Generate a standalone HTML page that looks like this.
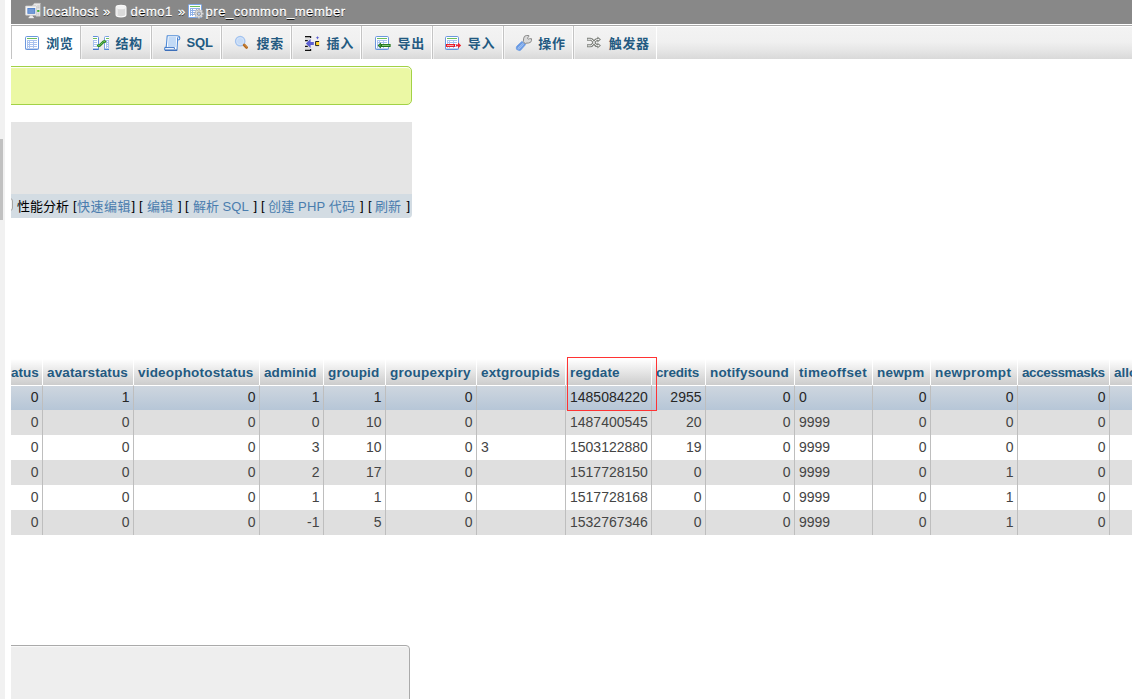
<!DOCTYPE html>
<html lang="zh-CN">
<head>
<meta charset="utf-8">
<title>localhost / demo1 / pre_common_member | phpMyAdmin</title>
<style>
*{box-sizing:border-box;margin:0;padding:0}
html,body{width:1132px;height:699px;overflow:hidden;background:#fff}
body{position:relative;font-family:"Liberation Sans","Noto Sans CJK SC",sans-serif;font-size:13px;color:#444}
.abs{position:absolute}
/* left nav scrollbar sliver */
#navtrack{left:0;top:0;width:5px;height:699px;background:#f1f1f1}
#navthumb{left:0;top:139px;width:3px;height:81px;background:#c1c1c1}
#main{left:11px;top:0;width:1121px;height:699px;overflow:hidden}
#main>.abs,#main>table{margin-left:-11px}
/* breadcrumb bar */
#serverinfo{left:11px;top:0;width:1121px;height:24px;background:#888;color:#fff;white-space:nowrap;text-shadow:0 1px 0 #000}
#serverinfo .t{position:absolute;top:1px;line-height:22px;font-size:13px;-webkit-text-stroke:.3px #fff}
#serverinfo svg{position:absolute}
/* tabs */
#topmenu{left:11px;top:25px;width:1121px;height:34px;border-top:1px solid #aaa;background:linear-gradient(#fff 0,#fff 1px,#f3f3f3 1px,#f0f0f0 48%,#e5e5e5 76%,#d9d9d9 100%)}
.tab{position:absolute;top:26px;height:33px;border-left:1px solid #c4c4c4;border-right:1px solid #fff;margin-right:-1px;background:linear-gradient(#fff 0,#fff 1px,#f3f3f3 1px,#f0f0f0 48%,#e5e5e5 76%,#d9d9d9 100%);box-shadow:inset 1px 0 0 rgba(255,255,255,.5)}
.tab.active{background:#fff;box-shadow:none}
.tl{top:27px;letter-spacing:.6px;line-height:33px;font-size:13px;font-weight:bold;color:#235a81;white-space:nowrap}
svg.ic{overflow:visible}
/* messages */
#success{left:-10px;top:66px;width:422px;height:39px;border:1px solid #a2d246;border-radius:5px;background:#ebf8a4;box-shadow:inset 0 1px 1px #fff}
#sqlq{left:11px;top:122px;width:401px;height:72px;background:#e5e5e5}
#tools{left:11px;top:194px;width:401px;height:24px;background:#d3dce3;border-radius:0 0 4px 0;white-space:nowrap;color:#000;font-size:13px;line-height:24px}
#tools a{color:#4a7dae;text-decoration:none}
#tools span,#tools a{position:absolute;top:1px}
#tools span{top:0}
#fs{left:-10px;top:645px;width:420px;height:80px;border:1px solid #aaa;border-radius:4px;background:#eee;box-shadow:inset 0 1px 1px rgba(255,255,255,.7)}
/* results table */
#res{left:11px;top:359px;border-collapse:separate;border-spacing:0;table-layout:fixed;width:1190px}
#res th{height:26px;padding:1px 0 1px 4px;text-align:left;font-weight:bold;font-size:13.5px;color:#235a81;background:linear-gradient(#fff,#ccc);border-right:1px solid #fff;white-space:nowrap;overflow:hidden}
#res td{height:25px;padding:0 3.5px 2px 4px;text-align:right;font-size:14px;color:#444;border-right:1px solid #bebebe;white-space:nowrap;overflow:hidden}
#res td.l{text-align:left}
#res tr.e td{background:#dfdfdf}
#res tr.o td{background:#fff}
#res tr.h td{background:linear-gradient(#ced6df,#b6c6d7);border-top:1px solid #fff;color:#262626}
#redbox{left:567px;top:357px;width:90px;height:54px;border:1px solid #f33}
</style>
</head>
<body>
<div id="navtrack" class="abs"></div>
<div id="navthumb" class="abs"></div>

<div id="main" class="abs">
<div id="serverinfo" class="abs">
    <span class="t" style="left:32px;letter-spacing:.43px">localhost</span>
  <span class="t" style="left:92px">»</span>
  <span class="t" style="left:119.5px;letter-spacing:.49px">demo1</span>
  <span class="t" style="left:167px">»</span>
  <span class="t" style="left:194.6px;letter-spacing:.55px">pre_common_member</span>
</div>
<svg class="abs ic" style="left:24.5px;top:3px" width="16" height="16" viewBox="0 0 16 16"><path d="M7,3 L9.4,0.3 H15 Q15.6,0.3 15.6,0.9 V12.6 Q15.6,13.2 15,13.2 H11 V3 Z" fill="#e9e9e9" stroke="#bdbdbd" stroke-width=".6"/><path d="M15.5,1V13" stroke="#9d9d9d" stroke-width=".7"/><path d="M12.2,3H14.6M12.2,4.8H14.6" stroke="#b5b5b5" stroke-width=".8"/><rect x="12.2" y="7" width="2.2" height="1.9" fill="#3cb034"/><rect x="12.4" y="9.6" width="1.8" height="3" fill="#cfcfd6"/><rect x="0.5" y="3" width="11" height="9.2" rx=".6" fill="#f3f3f3" stroke="#c9c9c9" stroke-width=".7"/><rect x="2.4" y="5" width="7.8" height="5.8" fill="#4f7fca"/><rect x="3.2" y="5.8" width="6.2" height="4.2" fill="#7099d6"/><path d="M5,12.4H7.4L8.6,14.8H3.8Z" fill="#ececec"/><rect x="3.6" y="14.2" width="5.2" height="1" fill="#f5f5f5"/></svg><svg class="abs ic" style="left:113px;top:3px" width="16" height="16" viewBox="0 0 16 16"><path d="M3.1,4.4 V11.8 Q3.1,13.8 8,13.8 Q12.9,13.8 12.9,11.8 V4.4 Q12.9,2.3 8,2.3 Q3.1,2.3 3.1,4.4Z" fill="#dadada" stroke="#fbfbfb" stroke-width="1.2"/><ellipse cx="8" cy="4.4" rx="4.4" ry="1.9" fill="#f4f4f4"/><path d="M4.4,6.2 V12.2" stroke="#ececec" stroke-width="1"/></svg><svg class="abs ic" style="left:187px;top:3px" width="16" height="16" viewBox="0 0 16 16"><rect x="1.5" y="1.5" width="13" height="13" rx=".8" fill="#fff" stroke="#7aa6ea"/><rect x="3" y="3" width="10" height="1" fill="#6cbf5c"/><rect x="3" y="5" width="10" height="8" fill="#8fb1e8"/><g fill="#fff"><rect x="4" y="6" width="1" height="1"/><rect x="6" y="6" width="3" height="1"/><rect x="10" y="6" width="2" height="1"/><rect x="4" y="8" width="1" height="1"/><rect x="6" y="8" width="3" height="1"/><rect x="4" y="10" width="1" height="1"/><rect x="6" y="10" width="2" height="1"/><rect x="4" y="12" width="1" height="1"/><rect x="6" y="12" width="2" height="1"/></g><g transform="translate(11.9,10.7)"><g fill="#d9d9d9" stroke="#a9a9a9" stroke-width=".5"><circle r="3.3"/><rect x="-.9" y="-4.6" width="1.8" height="9.2"/><rect x="-4.6" y="-.9" width="9.2" height="1.8"/><rect x="-.9" y="-4.6" width="1.8" height="9.2" transform="rotate(45)"/><rect x="-.9" y="-4.6" width="1.8" height="9.2" transform="rotate(-45)"/></g><circle r="3" fill="#dedede"/><circle r="1.7" fill="#b9d0f2" stroke="#8f8f8f" stroke-width=".9"/></g></svg>

<div id="topmenu" class="abs"></div>
<div class="tab active abs" style="left:11px;width:69px"></div>
<div class="tab abs" style="left:80px;width:71px"></div>
<div class="tab abs" style="left:151px;width:70px"></div>
<div class="tab abs" style="left:221px;width:70px"></div>
<div class="tab abs" style="left:291px;width:70px"></div>
<div class="tab abs" style="left:361px;width:71px"></div>
<div class="tab abs" style="left:432px;width:71px"></div>
<div class="tab abs" style="left:503px;width:70px"></div>
<div class="tab abs" style="left:573px;width:84px"></div>
<svg class="abs ic" style="left:24px;top:35px" width="16" height="16" viewBox="0 0 16 16"><rect x="1.5" y="1.5" width="13" height="13" rx="1.2" fill="#fff" stroke="#6c98de"/><rect x="1" y="13" width="14" height="1.6" fill="#4f82d2" opacity=".35"/><rect x="3" y="3" width="10" height="1" fill="#6cbf5c"/><g fill="#a9c2ef"><rect x="3" y="5" width="10" height="1"/><rect x="3" y="7" width="10" height="1"/><rect x="3" y="9" width="10" height="1"/><rect x="3" y="11" width="10" height="1"/><rect x="3" y="5" width="1" height="8"/><rect x="5" y="5" width="1" height="8"/><rect x="9" y="5" width="1" height="8"/></g></svg><b class="abs tl" style="left:46.2px">浏览</b>
<svg class="abs ic" style="left:93px;top:35px" width="16" height="16" viewBox="0 0 16 16"><path d="M0,1.5H4.5Q5.5,1.5 5.5,2.5V13.5Q5.5,14.5 4.5,14.5H0" fill="#fff" stroke="#5f8edb"/><rect x="0" y="13.6" width="5.8" height="1.3" fill="#3f73c8"/><rect x="0" y="3" width="4" height="1" fill="#6cbf5c"/><g fill="#a9c2ef"><rect x="0" y="5" width="4" height="1"/><rect x="0" y="7" width="4" height="1"/><rect x="0" y="9" width="4" height="1"/><rect x="0" y="11" width="4" height="1"/><rect x="0" y="5" width="1" height="7"/></g><path d="M16,1.5H12.5Q11.5,1.5 11.5,2.5V13.5Q11.5,14.5 12.5,14.5H16" fill="#fff" stroke="#7ba2e2"/><rect x="11.2" y="13.6" width="4.8" height="1.3" fill="#4f82d2"/><rect x="13" y="3" width="3" height="1" fill="#6cbf5c"/><g fill="#a9c2ef"><rect x="13" y="5" width="3" height="8"/></g><g fill="#fff"><rect x="14" y="6" width="1" height="1"/><rect x="14" y="8" width="1" height="1"/><rect x="14" y="10" width="1" height="1"/><rect x="14" y="12" width="1" height="1"/></g><path d="M5.2,10.6 L6.6,10.6 L10.6,6.6 L12,6.6" fill="none" stroke="#2f8a27" stroke-width="2.7" stroke-linecap="round" stroke-linejoin="round"/><path d="M5.6,10.5 L6.4,10.5 M7.6,9.4L9.4,7.6 M10.8,6.6L11.6,6.6" stroke="#86d476" stroke-width="0.8" stroke-linecap="round"/></svg><b class="abs tl" style="left:115.5px">结构</b>
<svg class="abs ic" style="left:164px;top:35px" width="16" height="16" viewBox="0 0 16 16"><path d="M3.2,0.8 H13 Q15.8,0.8 15.8,3.2 Q15.8,5 14,5 H13.6 L13,15.2 H2 Q0.3,15.2 0.6,13.6 L1,12.4 H2.2 Z" fill="#fff" stroke="#4e8ad6" stroke-width="1.1" stroke-linejoin="round"/><path d="M4.6,2 H12.2 L11.8,12 H3.8 Z" fill="#c2daf6"/><path d="M13.6,5 V3 Q13.6,2.2 14.3,2.4" fill="none" stroke="#3f78c8" stroke-width="1"/><path d="M1,12.6 H10.4 V14" fill="none" stroke="#3f78c8" stroke-width="1"/><path d="M1,15.2H13" stroke="#2f62b0" stroke-width="1.2"/></svg><b class="abs tl" style="left:186.5px;top:26px;letter-spacing:-0.15px">SQL</b>
<svg class="abs ic" style="left:234px;top:35px" width="16" height="16" viewBox="0 0 16 16"><circle cx="6.2" cy="6.2" r="4.6" fill="#c6dbf6" stroke="#a3c3ef" stroke-width="1.5"/><circle cx="6.2" cy="6.2" r="3.6" fill="none" stroke="#dbe8fa" stroke-width=".7"/><path d="M10.2,10.1 L12.6,12.4" stroke="#b4681c" stroke-width="2.8" stroke-linecap="round"/><path d="M10.5,9.9 L12.8,12.1" stroke="#d79a55" stroke-width=".8" stroke-linecap="round"/></svg><b class="abs tl" style="left:256.6px">搜索</b>
<svg class="abs ic" style="left:304px;top:35px" width="16" height="16" viewBox="0 0 16 16"><rect x="1" y="2" width="5" height="3.5" fill="#dcdcdc"/><rect x="1" y="11.5" width="5" height="3.5" fill="#dcdcdc"/><path d="M1,1.6H6.6V3" fill="none" stroke="#111" stroke-width="1.2"/><path d="M1,15.4H6.6V14" fill="none" stroke="#111" stroke-width="1.2"/><path d="M1,5.6H3.8M1,11.4H3.8" stroke="#111" stroke-width="1.1"/><path d="M1.8,8.5 L6.6,4 V6.9 H9.8 V10.1 H6.6 V13 Z" fill="#5a5fd2"/><rect x="11.8" y="6.8" width="3.4" height="3.6" fill="#ffd42a"/><path d="M15.1,6.5H11.6V10.6H15.1" fill="none" stroke="#222" stroke-width="1"/><path d="M13.5,0.9 L14.1,2.2 L15.3,2.7 L14.1,3.2 L13.5,4.5 L12.9,3.2 L11.7,2.7 L12.9,2.2Z" fill="#5a5fd2"/></svg><b class="abs tl" style="left:326.6px">插入</b>
<svg class="abs ic" style="left:374px;top:35px" width="16" height="16" viewBox="0 0 16 16"><rect x="1.5" y="1.5" width="13" height="13" rx="1.2" fill="#fff" stroke="#6c98de"/><rect x="1" y="13" width="14" height="1.6" fill="#4f82d2" opacity=".35"/><rect x="3" y="3" width="10" height="1" fill="#6cbf5c"/><g fill="#a9c2ef"><rect x="3" y="5" width="10" height="1"/><rect x="3" y="7" width="10" height="1"/><rect x="3" y="9" width="10" height="1"/><rect x="3" y="11" width="10" height="1"/><rect x="3" y="5" width="1" height="8"/><rect x="5" y="5" width="1" height="8"/><rect x="9" y="5" width="1" height="8"/></g><path d="M3.6,10.4 L7,7.4 V9 H16.6 V11.9 H7 V13.4 Z" fill="#23751a"/><path d="M8,10.4H15.6" stroke="#8ed184" stroke-width="1"/><path d="M4.8,10.4L6.4,9V11.8Z" fill="#59ad4c"/></svg><b class="abs tl" style="left:397.6px">导出</b>
<svg class="abs ic" style="left:444px;top:35px" width="16" height="16" viewBox="0 0 16 16"><rect x="1.5" y="1.5" width="13" height="13" rx="1.2" fill="#fff" stroke="#6c98de"/><rect x="1" y="13" width="14" height="1.6" fill="#4f82d2" opacity=".35"/><rect x="3" y="3" width="10" height="1" fill="#6cbf5c"/><g fill="#a9c2ef"><rect x="3" y="5" width="10" height="1"/><rect x="3" y="7" width="10" height="1"/><rect x="3" y="9" width="10" height="1"/><rect x="3" y="11" width="10" height="1"/><rect x="3" y="5" width="1" height="8"/><rect x="5" y="5" width="1" height="8"/><rect x="9" y="5" width="1" height="8"/></g><path d="M2,9 H11 V11.9 H2 Z" fill="#e8141e"/><path d="M3,10.4H9.8" stroke="#fbb" stroke-width="1"/><path d="M12,9.6 H14 V7.6 L17.2,10.4 L14,13.2 V11.2 H12 Z" fill="#ee2430"/></svg><b class="abs tl" style="left:467.8px">导入</b>
<svg class="abs ic" style="left:515px;top:35px" width="16" height="16" viewBox="0 0 16 16"><path d="M6.9,6.4 L10.6,9.6 L5.5,15.3 Q5,15.8 4.3,15.5 L1.8,14.5 Q1.4,14.3 1.4,13.8 V12.1 Q1.4,11.7 1.8,11.3 Z" fill="#6497e3" stroke="#6497e3" stroke-width=".8" stroke-linejoin="round"/><path d="M3.6,13.4 L7.8,9.2" stroke="#9fbff0" stroke-width="2.2" stroke-linecap="round"/><path d="M3.6,13.4 L7.8,9.2" stroke="#86aeeb" stroke-width="1" stroke-linecap="round"/><path d="M8.3,6.5 L8.7,3.2 Q9,0.7 11.4,0.5 L13.8,0.5 L13.8,1.7 Q12.1,2.5 12.7,3.7 Q13.5,4.7 14.6,3.7 L16.5,3.7 L16.5,5.6 Q16,7.8 13.6,8 L10.9,8.2 L10.3,8.9 Z" fill="#d9d9d9" stroke="#8a8a8a" stroke-width="1" stroke-linejoin="round"/></svg><b class="abs tl" style="left:538.3px">操作</b>
<svg class="abs ic" style="left:586px;top:35px" width="16" height="16" viewBox="0 0 16 16"><g fill="none" stroke="#7d807b" stroke-width="3" stroke-linejoin="round"><path d="M1,4.3H4.4Q6,4.3 7.2,6.3L8.6,8.6Q9.8,10.6 11.4,10.6H13"/><path d="M1,10.8H4.4Q6,10.8 7.2,8.8L8.6,6.5Q9.8,4.5 11.4,4.5H13"/></g><path d="M11.4,1.6L15,4.5L11.4,7.4Z" fill="#7d807b"/><path d="M11.4,7.7L15,10.6L11.4,13.5Z" fill="#7d807b"/><g fill="none" stroke="#f4f4f4" stroke-width="1"><path d="M1.6,4.3H4.4Q6,4.3 7.2,6.3L8.6,8.6Q9.8,10.6 11.4,10.6H13"/><path d="M1.6,10.8H4.4Q6,10.8 7.2,8.8L8.6,6.5Q9.8,4.5 11.4,4.5H13"/></g><path d="M12.3,3.4L13.6,4.5L12.3,5.6Z" fill="#f4f4f4"/><path d="M12.3,9.5L13.6,10.6L12.3,11.7Z" fill="#f4f4f4"/></svg><b class="abs tl" style="left:608.8px">触发器</b>

<div id="success" class="abs"></div>
<div id="sqlq" class="abs"></div>
<div id="tools" class="abs">
  <i style="position:absolute;left:-12px;top:4px;width:14px;height:13px;border:1px solid #a6a6a6;border-radius:3px;background:#f2f2f2"></i>
  <span style="left:6px;top:1px">性能分析</span>
  <span style="left:62px">[</span><a style="left:66px;letter-spacing:.5px">快速编辑</a><span style="left:120.5px">]</span>
  <span style="left:128px">[</span><a style="left:136px">编辑</a><span style="left:167px">]</span>
  <span style="left:174px">[</span><a style="left:182px">解析 SQL</a><span style="left:242.5px">]</span>
  <span style="left:250px">[</span><a style="left:257px;letter-spacing:.15px">创建 PHP 代码</a><span style="left:349px">]</span>
  <span style="left:357px">[</span><a style="left:364px">刷新</a><span style="left:395.5px">]</span>
</div>

<table id="res" class="abs">
<colgroup>
<col style="width:32px"><col style="width:91px"><col style="width:126px"><col style="width:64px"><col style="width:62px">
<col style="width:91px"><col style="width:89px"><col style="width:86px"><col style="width:54px"><col style="width:89px">
<col style="width:78px"><col style="width:58px"><col style="width:87px"><col style="width:92px"><col style="width:91px">
</colgroup>
<tr><th style="padding-left:0">atus</th><th style="letter-spacing:0.12px">avatarstatus</th><th style="letter-spacing:0.19px">videophotostatus</th><th style="letter-spacing:0.11px">adminid</th><th style="letter-spacing:0.17px">groupid</th><th style="letter-spacing:0.24px">groupexpiry</th><th style="letter-spacing:0.16px">extgroupids</th><th style="letter-spacing:0.13px">regdate</th><th style="letter-spacing:-0.17px">credits</th><th style="letter-spacing:0.15px">notifysound</th><th style="letter-spacing:0.35px">timeoffset</th><th style="letter-spacing:0.20px">newpm</th><th style="letter-spacing:0.40px">newprompt</th><th style="letter-spacing:-0.41px">accessmasks</th><th>allowadmincp</th></tr>
<tr class="h"><td>0</td><td>1</td><td>0</td><td>1</td><td>1</td><td>0</td><td class="l"></td><td class="l">1485084220</td><td>2955</td><td>0</td><td class="l">0</td><td>0</td><td>0</td><td>0</td><td>1</td></tr>
<tr class="e"><td>0</td><td>0</td><td>0</td><td>0</td><td>10</td><td>0</td><td class="l"></td><td class="l">1487400545</td><td>20</td><td>0</td><td class="l">9999</td><td>0</td><td>0</td><td>0</td><td>0</td></tr>
<tr class="o"><td>0</td><td>0</td><td>0</td><td>3</td><td>10</td><td>0</td><td class="l">3</td><td class="l">1503122880</td><td>19</td><td>0</td><td class="l">9999</td><td>0</td><td>0</td><td>0</td><td>0</td></tr>
<tr class="e"><td>0</td><td>0</td><td>0</td><td>2</td><td>17</td><td>0</td><td class="l"></td><td class="l">1517728150</td><td>0</td><td>0</td><td class="l">9999</td><td>0</td><td>1</td><td>0</td><td>0</td></tr>
<tr class="o"><td>0</td><td>0</td><td>0</td><td>1</td><td>1</td><td>0</td><td class="l"></td><td class="l">1517728168</td><td>0</td><td>0</td><td class="l">9999</td><td>0</td><td>1</td><td>0</td><td>0</td></tr>
<tr class="e"><td>0</td><td>0</td><td>0</td><td>-1</td><td>5</td><td>0</td><td class="l"></td><td class="l">1532767346</td><td>0</td><td>0</td><td class="l">9999</td><td>0</td><td>1</td><td>0</td><td>0</td></tr>
</table>
<div id="redbox" class="abs"></div>

<div id="fs" class="abs"></div>
</div>
</body>
</html>
